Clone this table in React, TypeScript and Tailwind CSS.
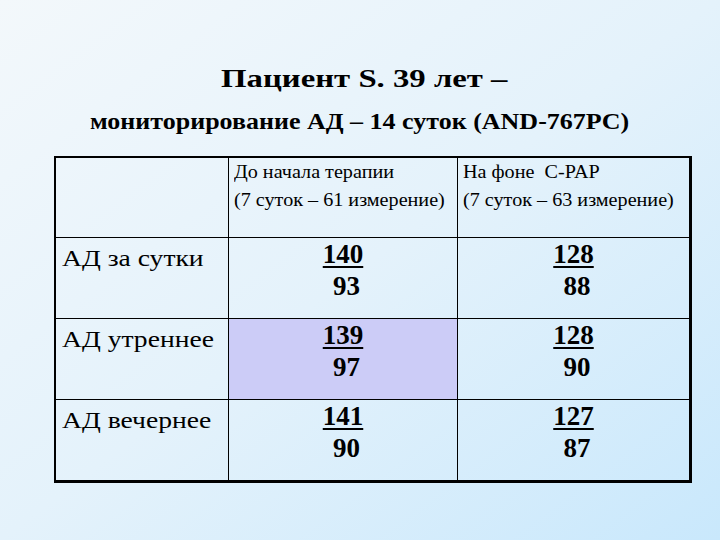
const rows = [
  { label: 'АД за сутки', a: ['140', '93'], b: ['128', '88'] },
  { label: 'АД утреннее', a: ['139', '97'], b: ['128', '90'], hl: true },
  { label: 'АД вечернее', a: ['141', '90'], b: ['127', '87'] },
];

function Pressure({ v }: { v: string[] }) {
  return (
    <div className="flex flex-col items-center font-bold text-[27px] leading-[32px]">
      <span className="underline decoration-2 underline-offset-[3px]">{v[0]}</span>
      <span className="pl-[7px]">{v[1]}</span>
    </div>
  );
}

export default function App() {
  return (
    <div className="h-[540px] w-[720px] overflow-hidden bg-gradient-to-br from-[#f3f8fb] via-[#e4f2fb] to-[#c9e8fc] font-['Liberation_Serif','DejaVu_Serif',serif] text-black">
      <div className="pt-[64px] text-center font-bold">
        <h1 className="pl-[8px] text-[25px] leading-[30px]">
          <span className="inline-block scale-x-[1.31]">Пациент S. 39 лет –</span>
        </h1>
        <h2 className="mt-[14px] text-[23px] leading-[28px]">
          <span className="inline-block scale-x-[1.13]">мониторирование АД – 14 суток (AND-767PC)</span>
        </h2>
      </div>

      <div className="mt-[20px] ml-[54px] w-[638px] border-2 border-r-[3px] border-b-[3px] border-black">
        <div className="grid grid-cols-[173px_229px_231px]">
          <div className="h-[80px] border-r border-b border-black" />
          <div className="h-[80px] border-r border-b border-black pl-[5px] text-[18px] leading-[28px]">
            <div className="origin-left scale-x-[1.12]">До начала терапии</div>
            <div className="origin-left scale-x-[1.12]">(7 суток – 61 измерение)</div>
          </div>
          <div className="h-[80px] border-b border-black pl-[5px] text-[18px] leading-[28px]">
            <div className="origin-left scale-x-[1.12]">На фоне&nbsp; C-PAP</div>
            <div className="origin-left scale-x-[1.12]">(7 суток – 63 измерение)</div>
          </div>
          {rows.map((r, i) => (
            <div key={r.label} className="contents">
              <div
                className={`${i < rows.length - 1 ? 'h-[81px] border-b' : 'h-[80px]'} border-r border-black pl-[6px] pt-[7px] text-[23px] leading-[28px]`}
              >
                <div className="origin-left scale-x-[1.2]">{r.label}</div>
              </div>
              <div
                className={`${i < rows.length - 1 ? 'h-[81px] border-b' : 'h-[80px]'} border-r border-black ${r.hl ? 'bg-[#ccccf7]' : ''}`}
              >
                <Pressure v={r.a} />
              </div>
              <div className={`${i < rows.length - 1 ? 'h-[81px] border-b' : 'h-[80px]'} border-black`}>
                <Pressure v={r.b} />
              </div>
            </div>
          ))}
        </div>
      </div>
    </div>
  );
}
